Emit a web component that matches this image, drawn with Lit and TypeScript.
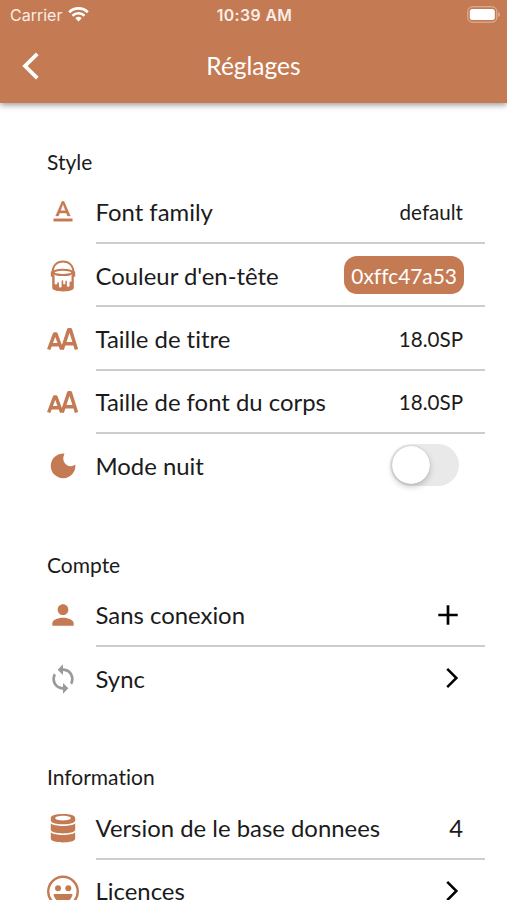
import { LitElement, html, css, svg } from "lit";
import { customElement } from "lit/decorators.js";

const icons: Record<string, unknown> = {
  format: svg`<path transform="scale(1.3333)" stroke="currentColor" stroke-width=".25" d="M5 17v2h14v-2H5zm4.5-4.2h5l.9 2.2h2.1L12.75 4h-1.5L6.5 15h2.1l.9-2.2zM12 5.98L13.87 11h-3.74L12 5.98z"/>`,
  bucket: svg`<path d="M5.400 13C5.600 5.500 10 1.500 16 1.500S26.400 5.500 26.600 13" fill="none" stroke="currentColor" stroke-width="1.900"/>
    <path d="M3.800 11.500h3v5.200h-3zM25.200 11.500h3v5.200h-3z"/>
    <ellipse cx="16" cy="12.400" rx="9.300" ry="2.700" fill="none" stroke="currentColor" stroke-width="2"/>
    <path d="M5.200 13.500 7.600 15.500V23.500c.2 1.300 2.500 1.300 2.700 0v-.5c.2-1 1.600-1 1.700 0v3.400c.1 1.500 2.500 1.500 2.600 0v-5.400c.1-1 1.500-1 1.600 0v2.500c.1 1.200 2.100 1.200 2.200 0v-2.300c.1-1 1.400-1 1.500 0v4.500c.2 1.500 2.500 1.500 2.600 0v-3.500c.1-.8 1.900-1 2-.4V15.500l2.300-2V28c-.3 2.300-5 3.400-10.700 3.400S5.500 30.300 5.200 28z"/>`,
  size: svg`<g fill="none" stroke="currentColor" stroke-width="3.500" stroke-linejoin="round"><path d="M1.700 26.500 7.500 11H9l5.700 15.500M4 21.800h9"/><path d="M15.200 26.500 21.700 6.800h1.700L29.500 26.500M17.500 20.700h10"/></g>`,
  moon: svg`<path d="M17.500 3.700A12.300 12.300 0 1 0 28.300 14.600C22 19.500 13 12.500 17.500 3.700z"/>`,
  person: svg`<path transform="scale(1.3333)" d="M12 12c2.210 0 4-1.790 4-4s-1.790-4-4-4-4 1.790-4 4 1.790 4 4 4zm0 2c-2.670 0-8 1.340-8 4v2h16v-2c0-2.660-5.330-4-8-4z"/>`,
  sync: svg`<path transform="scale(1.3333)" d="M12 4V1L8 5l4 4V6c3.310 0 6 2.690 6 6 0 1.010-.25 1.970-.7 2.800l1.460 1.460C19.540 15.030 20 13.570 20 12c0-4.420-3.580-8-8-8zm0 14c-3.310 0-6-2.690-6-6 0-1.010.25-1.970.7-2.800L5.240 7.740C4.460 8.970 4 10.430 4 12c0 4.420 3.580 8 8 8v3l4-4-4-4v3z"/>`,
  database: svg`<path fill-rule="evenodd" d="M3.800 6C3.800 3.300 9 2 16 2S28.200 3.300 28.200 6v2.200c0 2.700-5.200 4-12.200 4S3.800 10.900 3.800 8.200zM16 3.700c-4.500 0-7.800 1-7.800 2.400s3.300 2.400 7.800 2.400 7.800-1 7.800-2.400-3.300-2.400-7.800-2.400z"/><path d="M3.800 11.300c3.500 3.600 20.900 3.600 24.400 0v6.200c0 5.200-24.400 5.200-24.400 0zM3.800 20.300c3.500 3.600 20.900 3.600 24.400 0v6.200c0 5.200-24.400 5.200-24.400 0z"/>`,
  smile: svg`<circle cx="16" cy="16.500" r="14.800" fill="none" stroke="currentColor" stroke-width="2.400"/><circle cx="11" cy="13.300" r="3"/><circle cx="21.300" cy="13.300" r="3"/><path d="M6.500 19h19c-.5 5-4.500 8.500-9.500 8.500S7 24 6.500 19z"/>`,
  plus: svg`<path d="M6.300 16h19.400M16 6.300v19.400" fill="none" stroke="#000" stroke-width="2.700"/>`,
  next: svg`<path d="M15.200 6.800 24.400 16l-9.200 9.200" fill="none" stroke="#000" stroke-width="2.500"/>`,
};

const icon = (name: string, cls = "") =>
  html`<svg class="icon ${cls}" viewBox="0 0 32 32" fill="currentColor">${icons[name]}</svg>`;

interface Row { icon: string; label: string; value?: string; kind: string; muted?: boolean }

const sections: { title: string; rows: Row[] }[] = [
  { title: "Style", rows: [
    { icon: "format", label: "Font family", value: "default", kind: "text" },
    { icon: "bucket", label: "Couleur d'en-tête", value: "0xffc47a53", kind: "pill" },
    { icon: "size", label: "Taille de titre", value: "18.0SP", kind: "text" },
    { icon: "size", label: "Taille de font du corps", value: "18.0SP", kind: "text" },
    { icon: "moon", label: "Mode nuit", kind: "switch" },
  ] },
  { title: "Compte", rows: [
    { icon: "person", label: "Sans conexion", kind: "plus" },
    { icon: "sync", label: "Sync", kind: "next", muted: true },
  ] },
  { title: "Information", rows: [
    { icon: "database", label: "Version de le base donnees", value: "4", kind: "count" },
    { icon: "smile", label: "Licences", kind: "next" },
  ] },
];

@customElement("app-root")
export class AppRoot extends LitElement {
  static styles = css`
    :host { display: flex; flex-direction: column; height: 900px; overflow: hidden; background: #fff; color: #1b1b1b; font-family: Lato, sans-serif; font-variant-ligatures: none; }
    * { box-sizing: border-box; }
    header { flex: none; height: 103px; background: #c47a53; color: #fff; box-shadow: 0 2px 6px rgba(0,0,0,.4); display: flex; flex-direction: column; }
    .status { height: 29px; padding: 0 8px 0 10px; display: grid; grid-template-columns: 1fr auto 1fr; align-items: center; font-family: Inter, sans-serif; font-size: 16px; color: #fbeee8; }
    .carrier { display: flex; align-items: center; gap: 6px; }
    .wifi { width: 21px; height: 15px; }
    .time { font-weight: 600; font-size: 15.800px; letter-spacing: .4px; padding-top: 1px; }
    .battery { justify-self: end; width: 33px; height: 17px; margin-right: -1px; }
    .bar { height: 73px; display: grid; grid-template-columns: 60px 1fr 60px; align-items: center; text-align: center; }
    .back { width: 32px; height: 32px; margin-left: 15px; }
    h1 { margin: 0; font-size: 24.500px; font-weight: 400; line-height: 32px; padding-top: 1px; }
    section { flex: none; }
    h2 { margin: 0; height: 86.200px; padding: 0 0 5px 47px; display: flex; align-items: flex-end; font-size: 21px; font-weight: 400; line-height: 28px; }
    section:first-child h2 { height: 77.700px; }
    .row { height: 63.350px; margin: 0 22px 0 47px; display: flex; }
    .lead { width: 48.500px; flex: none; display: flex; align-items: center; color: #c47a53; }
    .muted { color: #999; }
    .icon { width: 32px; height: 32px; display: block; }
    .body { flex: 1; display: flex; align-items: center; justify-content: space-between; border-bottom: 2px solid #cdcdcd; padding: 1px 22px 0 0; font-size: 23.900px; white-space: nowrap; }
    .row:last-child .body { border-bottom-color: transparent; }
    .text { font-size: 20.600px; }
    .pill { background: #c47a53; color: #fff; border-radius: 13px; height: 38px; line-height: 39px; padding: 0 7px; margin-right: -1px; font-size: 20.900px; }
    .trail { margin-right: -1px; }
    .switch { width: 69px; height: 42px; border-radius: 21px; background: #e9e9e9; padding: 2px; margin-right: 4px; }
    .knob { width: 38px; height: 38px; border-radius: 50%; background: #fff; box-shadow: 0 3px 6px rgba(0,0,0,.2), 0 0 1px rgba(0,0,0,.3); }
  `;

  private trailing(row: Row) {
    if (row.kind === "switch") return html`<div class="switch"><div class="knob"></div></div>`;
    if (row.value) return html`<span class=${row.kind}>${row.value}</span>`;
    return icon(row.kind, "trail");
  }

  render() {
    return html`
      <header>
        <div class="status">
          <div class="carrier"><span>Carrier</span>
            <svg class="wifi" viewBox="0 0 21 15" fill="none" stroke="#fff" stroke-width="2.600">
              <path d="M1.200 5.200a13.300 13.300 0 0 1 18.600 0M4.500 8.700a8.600 8.600 0 0 1 12 0"/><path d="M10.500 14.500 7.300 11.300a4.700 4.700 0 0 1 6.400 0z" fill="#fff" stroke="none"/>
            </svg>
          </div>
          <span class="time">10:39 AM</span>
          <svg class="battery" viewBox="0 0 33 17"><rect x=".8" y=".8" width="29" height="15.400" rx="4.500" fill="none" stroke="#e3b9a3"/><rect x="2.800" y="3" width="25" height="11" rx="2.500" fill="#fff"/><path d="M31.300 6v5c2-.8 2-4.200 0-5z" fill="#e3b9a3"/></svg>
        </div>
        <div class="bar">
          <svg class="back" viewBox="0 0 32 32"><path d="M22.300 3.800 10 16l12.300 12.200" fill="none" stroke="#fff" stroke-width="3.800"/></svg>
          <h1>Réglages</h1>
        </div>
      </header>
      <main>
        ${sections.map((s) => html`<section><h2>${s.title}</h2>
          ${s.rows.map((r) => html`<div class="row">
            <div class="lead ${r.muted ? "muted" : ""}">${icon(r.icon)}</div>
            <div class="body"><span>${r.label}</span>${this.trailing(r)}</div>
          </div>`)}
        </section>`)}
      </main>`;
  }
}
